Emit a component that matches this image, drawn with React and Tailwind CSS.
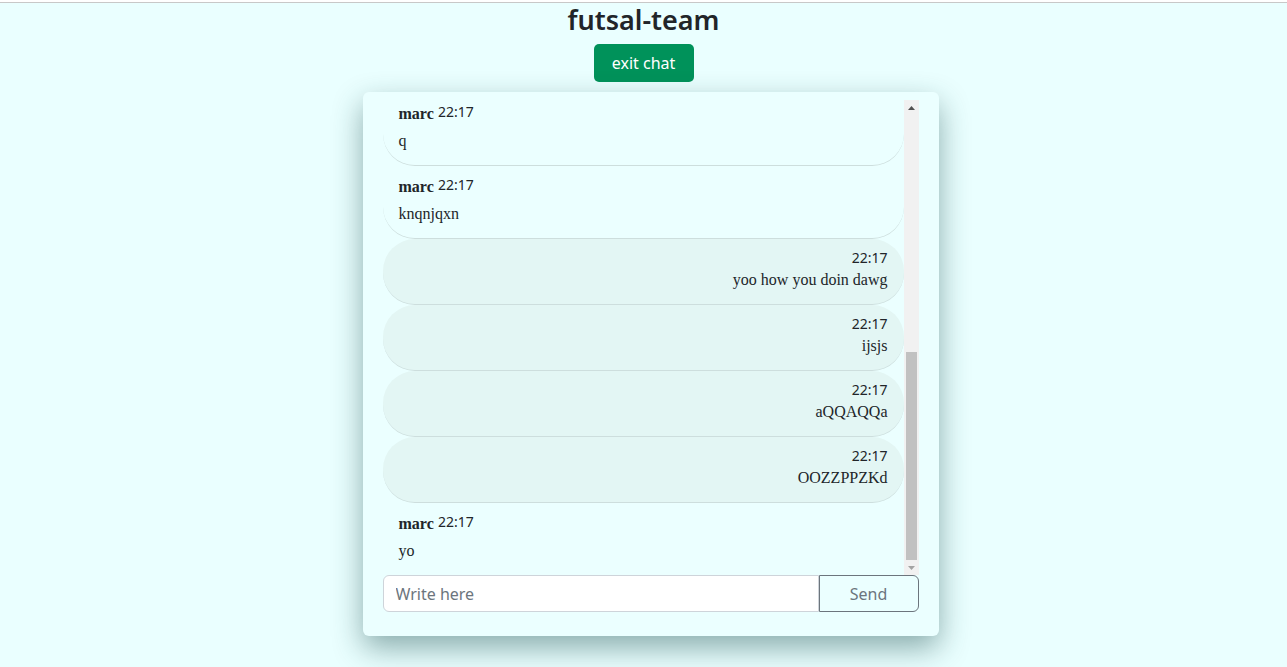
import React from 'react'

const sans = { fontFamily: '"Noto Sans", "Open Sans", sans-serif' }

const messages = [
  { mine: false, user: 'marc', time: '22:17', text: 'q' },
  { mine: false, user: 'marc', time: '22:17', text: 'knqnjqxn' },
  { mine: true, time: '22:17', text: 'yoo how you doin dawg' },
  { mine: true, time: '22:17', text: 'ijsjs' },
  { mine: true, time: '22:17', text: 'aQQAQQa' },
  { mine: true, time: '22:17', text: 'OOZZPPZKd' },
  { mine: false, user: 'marc', time: '22:17', text: 'yo' },
]

function Message({ msg, last }) {
  if (msg.mine) {
    return (
      <div className="shrink-0 rounded-[32px] border-b border-[#cddedd] bg-[#e3f6f4] px-4 pt-[9px] pb-3 text-right">
        <div className="h-5 text-[14px] leading-5 text-[#212529]" style={sans}>{msg.time}</div>
        <p className="font-['Liberation_Serif',serif] text-[16px] leading-6 text-[#212529]">{msg.text}</p>
      </div>
    )
  }
  return (
    <div className={'shrink-0 rounded-[32px] border-b px-4 pt-2 pb-3 ' + (last ? '-mb-px border-transparent' : 'border-[#cddedd]')}>
      <div className="h-6 leading-6 text-[#212529]">
        <b className="font-['Liberation_Serif',serif] text-[16px]">{msg.user}</b>{' '}
        <span className="relative -top-[2px] text-[14px]" style={sans}>{msg.time}</span>
      </div>
      <p className="mt-1 font-['Liberation_Serif',serif] text-[16px] leading-6 text-[#212529]">{msg.text}</p>
    </div>
  )
}

function Scrollbar() {
  return (
    <div className="flex w-[15px] shrink-0 flex-col bg-[#f1f1f1]">
      <div className="flex h-[15px] items-center justify-center">
        <svg width="7" height="4" viewBox="0 0 7 4"><path d="M0 4 L3.5 0 L7 4 Z" fill="#505050" /></svg>
      </div>
      <div className="flex flex-1 flex-col justify-end px-[2px]">
        <div className="h-[208px] bg-[#c1c1c1]" />
      </div>
      <div className="flex h-[15px] items-center justify-center">
        <svg width="7" height="4" viewBox="0 0 7 4"><path d="M0 0 L3.5 4 L7 0 Z" fill="#a3a3a3" /></svg>
      </div>
    </div>
  )
}

export default function App() {
  return (
    <div className="min-h-[667px] bg-[#eaffff]">
      <div className="h-[2px] bg-white" />
      <div className="h-px bg-[#c8c8c8]" />
      <div className="flex flex-col items-center">
        <h3 className="h-[34px] text-[27px] leading-[34px] font-semibold text-[#212529]" style={sans}>futsal-team</h3>
        <button className="mt-[7px] h-[38px] w-[100px] rounded-[5px] bg-[#00925a] text-[16px] text-white" style={sans}>
          exit chat
        </button>
        <div className="mt-[10px] ml-[14px] flex h-[544px] w-[576px] flex-col rounded-[6px] bg-[#ebffff] px-5 pt-2 pb-6 shadow-[0_12px_30px_rgba(20,70,70,0.45)]">
          <div className="flex h-[475px] shrink-0">
            <div className="flex flex-1 flex-col justify-end overflow-hidden">
              {messages.map((m, i) => (
                <Message key={i} msg={m} last={i === messages.length - 1} />
              ))}
            </div>
            <Scrollbar />
          </div>
          <div className="flex h-[38px]">
            <input
              placeholder="Write here"
              className="min-w-0 flex-1 rounded-l-[6px] border border-[#ced4da] bg-white px-3 text-[16px] text-[#212529] outline-none placeholder:text-[#6c757d]"
              style={sans}
            />
            <button className="w-[100px] rounded-r-[6px] border border-[#6c757d] text-[16px] text-[#6c757d]" style={sans}>
              Send
            </button>
          </div>
        </div>
      </div>
    </div>
  )
}
